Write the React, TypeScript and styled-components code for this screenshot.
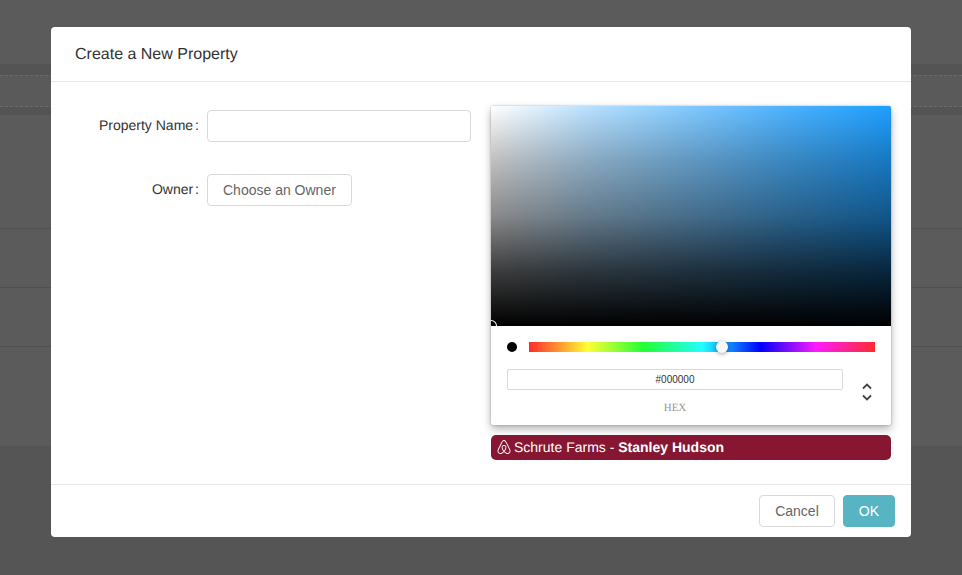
import React from "react";
import styled, { createGlobalStyle } from "styled-components";
import { FaAirbnb } from "react-icons/fa";

const Global = createGlobalStyle`
  html, body { margin: 0; padding: 0; height: 100%; }
  body { font-family: "Liberation Sans", Arial, sans-serif; font-size: 14px; color: #333; background: #555556; overflow: hidden; text-rendering: geometricPrecision; }
  * { box-sizing: border-box; }
`;

const Page = styled.div`
  height: 575px;
  display: flex;
  flex-direction: column;
  background: #555556;
`;
const PageTop = styled.div`
  height: 64px;
  background: #5b5b5b;
`;
const DashedBand = styled.div`
  height: 51px;
  padding-top: 11px;
  background: #545455;
`;
const DashedRow = styled.div`
  height: 32px;
  border-top: 1px dashed #6a6a6a;
  border-bottom: 1px dashed #6a6a6a;
  background: #5a5a5a;
`;
const TableRow = styled.div<{ $h: number }>`
  height: ${(p) => p.$h}px;
  background: #5b5b5b;
  border-bottom: 1px solid #505050;
`;
const TableEnd = styled.div`
  height: 99px;
  background: #5b5b5b;
`;

const Modal = styled.div`
  position: absolute;
  left: 51px;
  top: 27px;
  width: 860px;
  height: 510px;
  display: flex;
  flex-direction: column;
  background: #fff;
  border-radius: 4px;
`;
const Header = styled.header`
  height: 55px;
  padding: 1px 24px 0;
  display: flex;
  align-items: center;
  border-bottom: 1px solid #e8e8e8;
  font-size: 16px;
  color: #333;
`;
const Body = styled.div`
  flex: 1;
  padding: 24px 20px 24px 24px;
  display: flex;
  gap: 20px;
`;
const FormCol = styled.div`
  width: 396px;
  padding-top: 4px;
  display: flex;
  flex-direction: column;
  gap: 32px;
`;
const FormRow = styled.div`
  display: flex;
  align-items: flex-start;
  height: 32px;
`;
const Label = styled.label`
  width: 132px;
  padding-right: 8px;
  height: 30px;
  display: flex;
  justify-content: flex-end;
  align-items: center;
  color: #333;
`;
const Colon = styled.span`
  margin-left: 2px;
`;
const TextInput = styled.input`
  width: 264px;
  height: 32px;
  border: 1px solid #d9d9d9;
  border-radius: 4px;
  outline: none;
  background: #fff;
`;
const OwnerButton = styled.button`
  height: 32px;
  padding: 0 15px;
  background: #fff;
  border: 1px solid #d9d9d9;
  border-radius: 4px;
  font: inherit;
  color: #666;
`;

const PickerCol = styled.div`
  width: 400px;
  display: flex;
  flex-direction: column;
  gap: 10px;
`;
const Picker = styled.div`
  width: 400px;
  height: 319px;
  background: #fff;
  border-radius: 2px;
  box-shadow: 0 0 2px rgba(0, 0, 0, 0.3), 0 4px 8px rgba(0, 0, 0, 0.3);
`;
const Saturation = styled.div`
  position: relative;
  height: 220px;
  overflow: hidden;
  border-radius: 2px 2px 0 0;
  background:
    linear-gradient(to bottom, rgba(0, 0, 0, 0) 0%, rgba(0, 0, 0, 0.25) 25%, rgba(0, 0, 0, 0.46) 50%, rgba(0, 0, 0, 0.76) 75%, #000 100%),
    linear-gradient(to right, #fff 0%, rgba(255, 255, 255, 0.68) 25%, rgba(255, 255, 255, 0.44) 50%, rgba(255, 255, 255, 0.2) 75%, rgba(255, 255, 255, 0) 100%),
    #1e9fff;
`;
const SatPointer = styled.div`
  position: absolute;
  left: -6px;
  top: 214px;
  width: 12px;
  height: 12px;
  border-radius: 50%;
  box-shadow: inset 0 0 0 1px #fff;
`;
const Controls = styled.div`
  padding: 16px 16px 12px;
`;
const HueRow = styled.div`
  display: flex;
  align-items: center;
  height: 10px;
`;
const Swatch = styled.div`
  width: 10px;
  height: 10px;
  border-radius: 50%;
  background: #000;
  margin-right: 12px;
`;
const Hue = styled.div`
  position: relative;
  flex: 1;
  height: 10px;
  background: linear-gradient(
    to right,
    #ff2a2d 0%,
    #ffff33 17%,
    #22ff33 33%,
    #22ffff 50%,
    #0000ff 67%,
    #ff1aff 83%,
    #ff2a2d 100%
  );
`;
const HueThumb = styled.div`
  position: absolute;
  left: 187px;
  top: -1px;
  width: 12px;
  height: 12px;
  border-radius: 50%;
  background: #f8f8f8;
  box-shadow: 0 1px 4px rgba(0, 0, 0, 0.37);
`;
const FieldRow = styled.div`
  margin-top: 17px;
  display: flex;
`;
const Field = styled.div`
  flex: 1;
`;
const HexInput = styled.input`
  display: block;
  width: 100%;
  height: 21px;
  border: none;
  border-radius: 2px;
  box-shadow: inset 0 0 0 1px #dadada;
  font-size: 10px;
  font-family: "Liberation Sans", Arial, sans-serif;
  color: #333;
  text-align: center;
  outline: none;
  background: #fff;
`;
const FieldLabel = styled.div`
  margin-top: 12px;
  font-family: "Liberation Serif", "Times New Roman", serif;
  font-size: 11px;
  line-height: 12px;
  color: #969696;
  text-align: center;
  text-transform: uppercase;
`;
const Toggle = styled.div`
  width: 32px;
  margin-top: 11px;
  display: flex;
  justify-content: flex-end;
`;
const ToggleIcon = styled.svg`
  display: block;
  width: 16px;
  height: 24px;
`;
const Tag = styled.div`
  height: 25px;
  display: flex;
  align-items: center;
  padding: 0 0 2px 6px;
  background: #861631;
  border-radius: 5px;
  color: #fff;
  font-size: 14px;
`;
const TagIcon = styled(FaAirbnb)`
  width: 14px;
  height: 16px;
  margin-right: 3px;
`;
const Footer = styled.footer`
  height: 53px;
  padding: 10px 16px;
  border-top: 1px solid #e8e8e8;
  display: flex;
  justify-content: flex-end;
  gap: 8px;
`;
const ActionButton = styled.button<{ $primary?: boolean }>`
  height: 32px;
  padding: 0 15px;
  font: inherit;
  border-radius: 4px;
  border: 1px solid ${(p) => (p.$primary ? "#56b4c3" : "#d9d9d9")};
  background: ${(p) => (p.$primary ? "#56b4c3" : "#fff")};
  color: ${(p) => (p.$primary ? "#fff" : "#666")};
`;

export default function App() {
  return (
    <>
      <Global />
      <Page>
        <PageTop />
        <DashedBand>
          <DashedRow />
        </DashedBand>
        <TableRow $h={114} />
        <TableRow $h={59} />
        <TableRow $h={59} />
        <TableEnd />
      </Page>
      <Modal>
        <Header>Create a New Property</Header>
        <Body>
          <FormCol>
            <FormRow>
              <Label>
                Property Name<Colon>:</Colon>
              </Label>
              <TextInput />
            </FormRow>
            <FormRow>
              <Label>
                Owner<Colon>:</Colon>
              </Label>
              <OwnerButton>Choose an Owner</OwnerButton>
            </FormRow>
          </FormCol>
          <PickerCol>
            <Picker>
              <Saturation>
                <SatPointer />
              </Saturation>
              <Controls>
                <HueRow>
                  <Swatch />
                  <Hue>
                    <HueThumb />
                  </Hue>
                </HueRow>
                <FieldRow>
                  <Field>
                    <HexInput readOnly value="#000000" />
                    <FieldLabel>hex</FieldLabel>
                  </Field>
                  <Toggle>
                    <ToggleIcon viewBox="0 0 16 24" fill="none" stroke="#444" strokeWidth="1.8">
                      <path d="M4 8.5l4-4 4 4" />
                      <path d="M4 15.5l4 4 4-4" />
                    </ToggleIcon>
                  </Toggle>
                </FieldRow>
              </Controls>
            </Picker>
            <Tag>
              <TagIcon />
              <span>
                Schrute Farms - <b>Stanley Hudson</b>
              </span>
            </Tag>
          </PickerCol>
        </Body>
        <Footer>
          <ActionButton>Cancel</ActionButton>
          <ActionButton $primary>OK</ActionButton>
        </Footer>
      </Modal>
    </>
  );
}
